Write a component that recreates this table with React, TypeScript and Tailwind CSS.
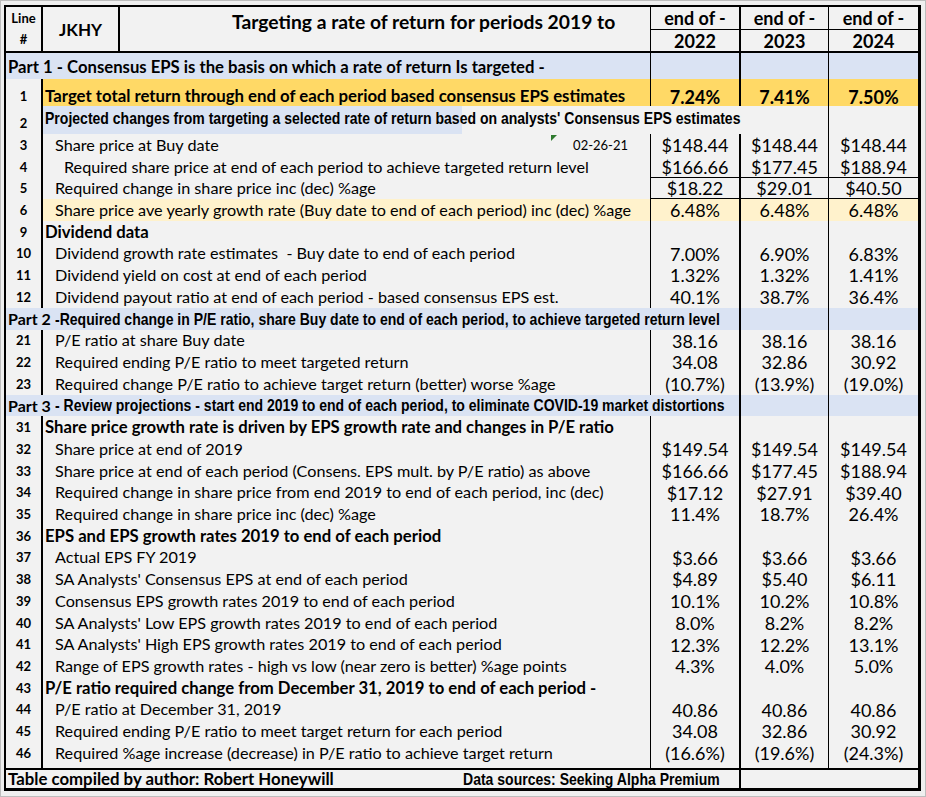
import React from "react";

type Row =
  | { kind: "part"; a: string; b: string }
  | {
      kind: "row";
      n: string;
      label: string;
      v?: string[];
      bold?: boolean;
      deep?: boolean;
      bb?: boolean;
      yellow?: boolean;
      date?: boolean;
    };

const rows: Row[] = [
  { kind: "row", n: "3", label: "Share price at Buy date", v: ["$148.44", "$148.44", "$148.44"], date: true },
  { kind: "row", n: "4", label: "Required share price at end of each period to achieve targeted return level", v: ["$166.66", "$177.45", "$188.94"], deep: true, bb: true },
  { kind: "row", n: "5", label: "Required change in share price inc (dec) %age", v: ["$18.22", "$29.01", "$40.50"], bb: true },
  { kind: "row", n: "6", label: "Share price ave yearly growth rate (Buy date to end of each period) inc (dec) %age", v: ["6.48%", "6.48%", "6.48%"], yellow: true },
  { kind: "row", n: "9", label: "Dividend data", bold: true },
  { kind: "row", n: "10", label: "Dividend growth rate estimates  - Buy date to end of each period", v: ["7.00%", "6.90%", "6.83%"] },
  { kind: "row", n: "11", label: "Dividend yield on cost at end of each period", v: ["1.32%", "1.32%", "1.41%"] },
  { kind: "row", n: "12", label: "Dividend payout ratio at end of each period - based consensus EPS est.", v: ["40.1%", "38.7%", "36.4%"] },
  { kind: "part", a: "Part 2 ", b: "-Required change in P/E ratio, share Buy date to end of each period, to achieve targeted return level" },
  { kind: "row", n: "21", label: "P/E ratio at share Buy date", v: ["38.16", "38.16", "38.16"] },
  { kind: "row", n: "22", label: "Required ending P/E ratio to meet targeted return", v: ["34.08", "32.86", "30.92"] },
  { kind: "row", n: "23", label: "Required change P/E ratio to achieve target return (better) worse %age", v: ["(10.7%)", "(13.9%)", "(19.0%)"] },
  { kind: "part", a: "Part 3 ", b: "- Review projections - start end 2019 to end of each period, to eliminate COVID-19 market distortions" },
  { kind: "row", n: "31", label: "Share price growth rate is driven by EPS growth rate and changes in P/E ratio", bold: true },
  { kind: "row", n: "32", label: "Share price at end of 2019", v: ["$149.54", "$149.54", "$149.54"] },
  { kind: "row", n: "33", label: "Share price at end of each period (Consens. EPS mult. by P/E ratio) as above", v: ["$166.66", "$177.45", "$188.94"] },
  { kind: "row", n: "34", label: "Required change in share price from end 2019 to end of each period, inc (dec)", v: ["$17.12", "$27.91", "$39.40"] },
  { kind: "row", n: "35", label: "Required change in share price inc (dec) %age", v: ["11.4%", "18.7%", "26.4%"] },
  { kind: "row", n: "36", label: "EPS and EPS growth rates 2019 to end of each period", bold: true },
  { kind: "row", n: "37", label: "Actual EPS FY 2019", v: ["$3.66", "$3.66", "$3.66"] },
  { kind: "row", n: "38", label: "SA Analysts' Consensus EPS at end of each period", v: ["$4.89", "$5.40", "$6.11"] },
  { kind: "row", n: "39", label: "Consensus EPS growth rates 2019 to end of each period", v: ["10.1%", "10.2%", "10.8%"] },
  { kind: "row", n: "40", label: "SA Analysts' Low EPS growth rates 2019 to end of each period", v: ["8.0%", "8.2%", "8.2%"] },
  { kind: "row", n: "41", label: "SA Analysts' High EPS growth rates 2019 to end of each period", v: ["12.3%", "12.2%", "13.1%"] },
  { kind: "row", n: "42", label: "Range of EPS growth rates - high vs low (near zero is better) %age points", v: ["4.3%", "4.0%", "5.0%"] },
  { kind: "row", n: "43", label: "P/E ratio required change from December 31, 2019 to end of each period -", bold: true },
  { kind: "row", n: "44", label: "P/E ratio at December 31, 2019", v: ["40.86", "40.86", "40.86"] },
  { kind: "row", n: "45", label: "Required ending P/E ratio to meet target return for each period", v: ["34.08", "32.86", "30.92"] },
  { kind: "row", n: "46", label: "Required %age increase (decrease) in P/E ratio to achieve target return", v: ["(16.6%)", "(19.6%)", "(24.3%)"] },
];

const HEIGHTS = ["h-[22px]", "h-[22px]", "h-[21px]", "h-[22px]", "h-[22px]", "h-[21px]", "h-[22px]"];

const NARROW =
  "inline-block origin-left scale-x-[0.85] font-['Liberation_Sans',Arial,sans-serif] font-bold text-[16.5px]";

function Triangle() {
  return (
    <svg className="absolute left-[508px] top-[1px]" width="6" height="6" viewBox="0 0 6 6">
      <polygon points="0,0 6,0 0,6" fill="#2f7a2f" />
    </svg>
  );
}

function BodyRow({ r, i }: { r: Row; i: number }) {
  const h = HEIGHTS[i % 7];
  if (r.kind === "part") {
    return (
      <div className={`flex ${h} bg-[#dae3f3]`}>
        <div className="w-[644px] pl-[2px] flex items-center whitespace-pre font-bold text-[16px]">
          <span>{r.a}</span>
          <span className={NARROW}>{r.b}</span>
        </div>
        <div className="w-[89px]" />
        <div className="w-[89px] border-l-2 border-black" />
        <div className="w-[90px] border-l border-black" />
      </div>
    );
  }
  const bg = r.yellow ? "bg-[#fff2cc]" : "";
  const pad = r.bold ? "pl-[2px] font-bold text-[16.7px]" : r.deep ? "pl-[21px] text-[16.2px]" : "pl-[12px] text-[16.2px]";
  const v = r.v ?? ["", "", ""];
  const bb = r.bb ? "border-b" : "";
  return (
    <div className={`flex ${h}`}>
      <div className="w-[35px] flex items-center justify-center font-bold text-[13px]">{r.n}</div>
      <div className={`relative w-[609px] border-l-2 border-black flex items-center whitespace-pre ${pad} ${bg}`}>
        <span>{r.label}</span>
        {r.date && (
          <>
            <Triangle />
            <span className="ml-auto mr-[22px] text-[13px]">02-26-21</span>
          </>
        )}
      </div>
      <div className={`w-[89px] border-l border-black flex items-center justify-center text-[18px] ${bb} ${bg}`}>{v[0]}</div>
      <div className={`w-[89px] border-l-2 border-black flex items-center justify-center text-[18px] ${bb} ${bg}`}>{v[1]}</div>
      <div className={`w-[90px] border-l border-black flex items-center justify-center text-[18px] ${bb} ${bg}`}>{v[2]}</div>
    </div>
  );
}

function YearHead({ year, thick }: { year: string; thick?: boolean }) {
  return (
    <div
      className={`${thick ? "w-[89px] border-l-2" : year === "2024" ? "w-[90px] border-l" : "w-[89px] border-l"} border-black flex flex-col font-bold text-[18px]`}
    >
      <div className="h-[23px] border-b border-black flex items-center justify-center">end of -</div>
      <div className="h-[21px] flex items-center justify-center">{year}</div>
    </div>
  );
}

export default function App() {
  return (
    <div className="w-[926px] h-[797px] bg-[#efefef] border border-[#bdbdbd] pl-[3px] pt-[4px]">
      <div className="w-[917px] h-[786px] border-l-2 border-t-2 border-r-[3px] border-b-[3px] border-black bg-[#f2f2f2] flex flex-col text-black font-['Lato',sans-serif] leading-none">
        {/* header */}
        <div className="flex h-[46px] border-b-2 border-black">
          <div className="w-[35px] flex flex-col items-center pt-[1px] font-bold text-[13px] leading-[21px]">
            <span>Line</span>
            <span>#</span>
          </div>
          <div className="w-[77px] border-l-2 border-black flex items-center justify-center font-bold text-[17px]">JKHY</div>
          <div className="w-[532px] border-l-2 border-black pl-[112px] pt-[4px] font-bold text-[19.3px] leading-[22px] whitespace-nowrap">
            Targeting a rate of return for periods 2019 to
          </div>
          <YearHead year="2022" />
          <YearHead year="2023" thick />
          <YearHead year="2024" />
        </div>
        {/* part 1 */}
        <div className="flex h-[26px] bg-[#dae3f3]">
          <div className="w-[644px] pl-[2px] pt-[2px] flex items-center whitespace-nowrap font-bold text-[16.7px]">
            Part 1 - Consensus EPS is the basis on which a rate of return Is targeted -
          </div>
          <div className="w-[89px] border-l border-black" />
          <div className="w-[89px] border-l-2 border-black" />
          <div className="w-[90px] border-l border-black" />
        </div>
        {/* row 1 */}
        <div className="flex h-[27px]">
          <div className="w-[35px] flex items-center justify-center pt-[8px] font-bold text-[13px]">1</div>
          <div className="w-[609px] border-l-2 border-black bg-[#ffd966] flex items-center pt-[8px] pl-[2px] whitespace-nowrap font-bold text-[16.8px]">
            Target total return through end of each period based consensus EPS estimates
          </div>
          <div className="w-[89px] border-l border-black bg-[#ffd966] flex items-center justify-center pt-[8px] font-bold text-[18px]">7.24%</div>
          <div className="w-[89px] border-l-2 border-black bg-[#ffd966] flex items-center justify-center pt-[8px] font-bold text-[18px]">7.41%</div>
          <div className="w-[90px] border-l border-black bg-[#ffd966] flex items-center justify-center pt-[8px] font-bold text-[18px]">7.50%</div>
        </div>
        {/* row 2 */}
        <div className="flex h-[28px]">
          <div className="w-[35px] flex items-center justify-center pt-[6px] font-bold text-[13px]">2</div>
          <div className="w-[609px] border-l-2 border-black">
            <div className="w-[419px] h-full bg-[#dae3f3] flex items-center pb-[4px] pl-[2px] whitespace-nowrap">
              <span className={NARROW}>
                Projected changes from targeting a selected rate of return based on analysts' Consensus EPS estimates
              </span>
            </div>
          </div>
          <div className="w-[89px]" />
          <div className="w-[89px]" />
          <div className="w-[90px] border-l border-black" />
        </div>
        {rows.map((r, i) => (
          <BodyRow key={i} r={r} i={i} />
        ))}
        {/* spacer */}
        <div className="flex h-[4px]">
          <div className="w-[35px]" />
          <div className="w-[609px] border-l-2 border-black" />
          <div className="w-[89px] border-l border-black" />
          <div className="w-[89px] border-l-2 border-black" />
          <div className="w-[90px] border-l border-black" />
        </div>
        {/* footer */}
        <div className="flex h-[20px] border-t-2 border-black">
          <div className="w-[457px] pl-[2px] flex items-center whitespace-nowrap font-bold text-[16.8px]">
            Table compiled by author: Robert Honeywill
          </div>
          <div className="w-[276px] flex items-center whitespace-nowrap">
            <span className={NARROW}>Data sources: Seeking Alpha Premium</span>
          </div>
          <div className="w-[89px] border-l-2 border-black" />
          <div className="w-[90px]" />
        </div>
      </div>
    </div>
  );
}
